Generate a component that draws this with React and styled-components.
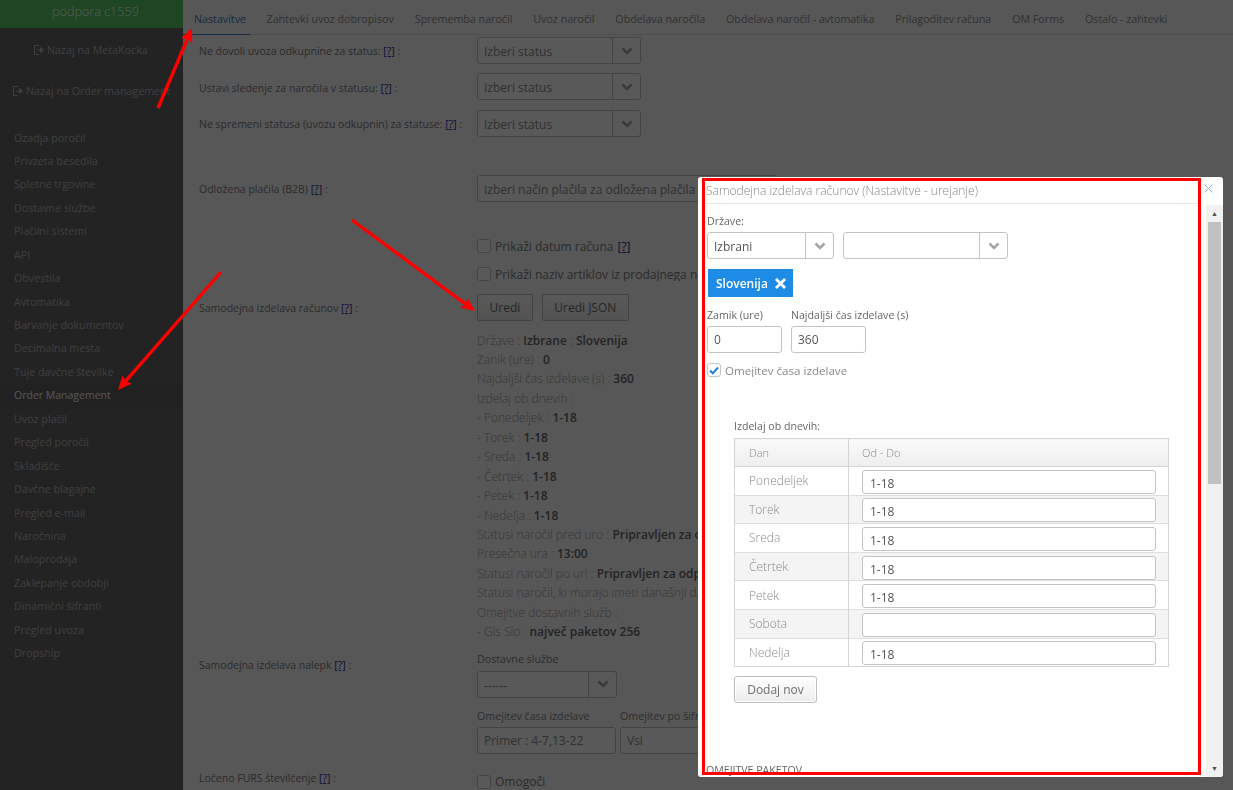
import React from 'react';
import styled, { createGlobalStyle } from 'styled-components';

const GlobalStyle = createGlobalStyle`
    html, body {
        margin: 0;
        height: 100%;
        overflow: hidden;
        font-family: "Open Sans", "Liberation Sans", sans-serif;
        font-size: 12px;
    }
    * { box-sizing: border-box; }
`;

const Page = styled.div`
    display: flex;
    width: 1233px;
    height: 790px;
    overflow: hidden;
    background: #fafafa;
`;

const Sidebar = styled.aside`
    flex: 0 0 183px;
    background: #656565;
    color: #b3b3b3;
    font-size: 10.7px;
`;

const Brand = styled.div`
    height: 28px;
    background: #56c864;
    color: #fff;
    font-size: 12.6px;
    font-weight: 300;
    line-height: 23px;
    padding-left: 52px;
`;

const BackLink = styled.div`
    display: flex;
    align-items: center;
    gap: 2px;
    height: 16px;
    padding-left: ${p => p.$left}px;
    margin-top: ${p => p.$top}px;
    white-space: nowrap;
    overflow: hidden;
    svg { flex: none; }
`;

const MenuList = styled.ul`
    list-style: none;
    margin: 27.5px 0 0;
    padding: 0;
`;

const MenuItem = styled.li`
    height: 23.45px;
    line-height: 23.45px;
    padding-left: 14px;
    ${p => p.$active && `
        background: #5f5f5f;
        color: #f5f5f5;
        font-size: 10.5px;
    `}
`;

const Main = styled.main`
    flex: 1;
    min-width: 0;
`;

const Tabs = styled.nav`
    display: flex;
    height: 35px;
    border-bottom: 1px solid #dedede;
    font-size: 10.7px;
    color: #8c8c8c;
`;

const Tab = styled.div`
    padding: 12px 0 0 11px;
    margin-right: 9.9px;
    line-height: 15px;
    white-space: nowrap;
    ${p => p.$active && `
        color: #3f7fc4;
        margin-right: 5.5px;
        padding-right: 4px;
        border-bottom: 1px solid #3f7fc4;
        height: 35px;
    `}
`;

const Form = styled.div`
    padding-left: 16px;
    color: #7a7a7a;
`;

const Row = styled.div`
    display: grid;
    grid-template-columns: 278px 1fr;
    margin-top: ${p => p.$top || 0}px;
`;

const Label = styled.label`
    font-size: 10.5px;
    line-height: 15px;
    padding-top: ${p => p.$pad ?? 7}px;
    white-space: nowrap;
    a { color: #2c2ca8; text-decoration: underline; }
`;

const Select = styled.div`
    display: flex;
    width: ${p => p.$width}px;
    height: 27px;
    flex: none;
    margin-top: ${p => p.$top || 0}px;
    background: #fff;
    border: 1px solid #c4c4c4;
    border-radius: 3px;
    font-size: 12px;
    color: ${p => p.$dark ? '#555' : '#8a8a8a'};
    overflow: hidden;
`;

const SelectValue = styled.div`
    flex: 1;
    padding-left: 6px;
    line-height: 27px;
    white-space: nowrap;
    overflow: hidden;
`;

const SelectArrow = styled.div`
    flex: 0 0 28px;
    display: flex;
    align-items: center;
    justify-content: center;
    border-left: 1px solid #c4c4c4;
    color: #a5a5a5;
`;

const CheckRow = styled.div`
    display: flex;
    align-items: center;
    gap: 4px;
    height: 14px;
    max-width: 221px;
    overflow: hidden;
    font-size: 12px;
    white-space: nowrap;
    margin-top: ${p => p.$top || 0}px;
    a { color: #2c2ca8; text-decoration: underline; }
`;

const Check = styled.span`
    flex: none;
    display: flex;
    align-items: center;
    justify-content: center;
    width: 14px;
    height: 14px;
    background: #fff;
    border: 1px solid #c4c4c4;
    border-radius: 3px;
`;

const Buttons = styled.div`
    display: flex;
    gap: 9px;
`;

const Button = styled.button`
    height: 27px;
    padding: 0 11.5px;
    background: linear-gradient(#fff, #ececec);
    border: 1px solid #bdbdbd;
    border-radius: 2px;
    color: #6e6e6e;
    font: 12px "Open Sans", sans-serif;
`;

const Summary = styled.div`
    margin-top: 9.5px;
    font-size: 12px;
    line-height: 19.45px;
    color: #a0a0a0;
    white-space: nowrap;
    font-weight: 300;
    b { color: #666; font-weight: 600; }
`;

const FieldLabel = styled.div`
    font-size: 10.7px;
    line-height: 14px;
    color: #858585;
    white-space: nowrap;
`;

const FieldRow = styled.div`
    display: flex;
    gap: 4px;
    margin-top: 11px;
`;

const Field = styled.div`
    display: flex;
    flex-direction: column;
    gap: 4px;
    width: ${p => p.$width}px;
`;

const TextBox = styled.div`
    width: ${p => p.$width ? `${p.$width}px` : '100%'};
    height: 27px;
    padding-left: 6px;
    line-height: 26px;
    background: #fff;
    border: 1px solid #c4c4c4;
    border-radius: 3px;
    font-size: 12px;
    color: ${p => p.$dark ? '#555' : '#8a8a8a'};
    white-space: nowrap;
`;

const Overlay = styled.div`
    position: fixed;
    inset: 0;
    background: rgba(0, 0, 0, 0.65);
`;

const Modal = styled.div`
    position: fixed;
    left: 698px;
    top: 177px;
    width: 525px;
    height: 600px;
    display: flex;
    flex-direction: column;
    background: #fff;
    border-radius: 3px;
    overflow: hidden;
`;

const ModalHeader = styled.div`
    display: flex;
    justify-content: space-between;
    flex: 0 0 28px;
    padding: 4px 10px 0 8px;
`;

const ModalTitle = styled.div`
    flex: 0 0 493px;
    height: 23px;
    border-bottom: 1px solid #e6e6e6;
    font-size: 12px;
    font-weight: 300;
    line-height: 20px;
    color: #888;
    white-space: nowrap;
`;

const Close = styled.div`
    margin-top: 3px;
    color: #8fb6d3;
    line-height: 0;
`;

const ModalBody = styled.div`
    flex: 1;
    display: flex;
    min-height: 0;
`;

const Content = styled.div`
    flex: 1;
    min-width: 0;
    padding: 9px 0 0 9px;
    font-size: 10.6px;
    line-height: 15px;
    color: #666;
    overflow: hidden;
`;

const Scrollbar = styled.div`
    flex: 0 0 17px;
    display: flex;
    flex-direction: column;
    align-items: center;
    background: #f1f1f1;
    color: #505050;
    font-size: 7px;
    line-height: 17px;
`;

const ScrollThumb = styled.div`
    width: 13px;
    height: 262px;
    background: #c1c1c1;
`;

const ScrollEnd = styled.div`
    margin-top: auto;
`;

const SelectGroup = styled.div`
    display: flex;
    gap: 9px;
    margin-top: 3px;
`;

const Tag = styled.div`
    display: flex;
    align-items: center;
    gap: 6px;
    width: fit-content;
    height: 28px;
    margin: 10px 0 0 1px;
    padding: 0 6px 0 8px;
    background: #1e8ce6;
    color: #fff;
    font-size: 12px;
    font-weight: 600;
`;

const InlineFields = styled.div`
    display: flex;
    gap: 9px;
    margin-top: 11px;
`;

const ModalField = styled.div`
    display: flex;
    flex-direction: column;
    gap: 3px;
    width: 75px;
    white-space: nowrap;
`;

const ModalCheck = styled(CheckRow)`
    color: #8a8a8a;
    font-size: 11.6px;
    margin-top: 10px;
`;

const TableBlock = styled.div`
    margin: 42px 0 0 27px;
    width: 435px;
`;

const Table = styled.table`
    width: 435px;
    margin-top: 4px;
    border-collapse: collapse;
    border: 1px solid #d4d4d4;
    table-layout: fixed;
    color: #8a8a8a;
    font-size: 12px;
    font-weight: 300;
    th {
        height: 28px;
        padding: 0 0 0 14px;
        background: linear-gradient(#fafafa, #eee);
        border: 1px solid #d4d4d4;
        text-align: left;
        font-weight: 300;
        font-size: 11px;
    }
    td {
        height: 28.6px;
        padding: 0 0 0 14px;
        border-left: 1px solid #d4d4d4;
        border-top: 1px solid #dedede;
    }
    td + td { padding-left: 13px; }
    th + th { padding-left: 13px; }
    tbody tr:nth-child(even) { background: #f4f4f4; }
`;

const CellInput = styled.div`
    width: 294px;
    height: 24px;
    margin-top: 2px;
    padding-left: 7px;
    line-height: 25px;
    background: #fff;
    border: 1px solid #c4c4c4;
    border-radius: 3px;
    color: #555;
    font-weight: 400;
`;

const AddButton = styled(Button)`
    display: block;
    width: 83px;
    padding: 0;
    margin-top: 9px;
    border-radius: 3px;
    box-shadow: inset 0 0 0 1px #fff;
`;

const SectionTitle = styled.div`
    margin: 60px 0 0 -1px;
    line-height: 14px;
    white-space: nowrap;
`;

const Highlight = styled.div`
    position: fixed;
    left: 702px;
    top: 178px;
    width: 499px;
    height: 597px;
    border: 3px solid #f00;
    pointer-events: none;
`;

const Arrows = styled.svg`
    position: fixed;
    inset: 0;
    pointer-events: none;
`;

const Chevron = () => (
    <svg width="12" height="8" viewBox="0 0 12 8">
        <polyline points="1.5,1.5 6,6 10.5,1.5" fill="none" stroke="currentColor" strokeWidth="2.6" />
    </svg>
);

const BackIcon = () => (
    <svg width="12" height="12" viewBox="0 0 12 12" fill="none" stroke="currentColor">
        <path d="M6 1.5H1.5v9H6" />
        <path d="M4 6h4.5M7.5 3.5 10.5 6l-3 2.5z" fill="currentColor" />
    </svg>
);

const menu = [
    'Ozadja poročil', 'Privzeta besedila', 'Spletne trgovine', 'Dostavne službe', 'Plačilni sistemi',
    'API', 'Obvestila', 'Avtomatika', 'Barvanje dokumentov', 'Decimalna mesta', 'Tuje davčne številke',
    'Order Management', 'Uvoz plačil', 'Pregled poročil', 'Skladišče', 'Davčne blagajne', 'Pregled e-mail',
    'Naročnina', 'Maloprodaja', 'Zaklepanje obdobji', 'Dinamični šifranti', 'Pregled uvoza', 'Dropship',
];

const tabs = [
    'Nastavitve', 'Zahtevki uvoz dobropisov', 'Sprememba naročil', 'Uvoz naročil', 'Obdelava naročila',
    'Obdelava naročil - avtomatika', 'Prilagoditev računa', 'OM Forms', 'Ostalo - zahtevki',
];

const days = [
    ['Ponedeljek', '1-18'], ['Torek', '1-18'], ['Sreda', '1-18'], ['Četrtek', '1-18'],
    ['Petek', '1-18'], ['Sobota', ''], ['Nedelja', '1-18'],
];

const summary = [
    ['Države : ', 'Izbrane', ' : ', 'Slovenija'],
    ['Zanik (ure) : ', '0'],
    ['Najdaljši čas izdelave (s) : ', '360'],
    ['Izdelaj ob dnevih :'],
    ['- Ponedeljek : ', '1-18'],
    ['- Torek : ', '1-18'],
    ['- Sreda : ', '1-18'],
    ['- Četrtek : ', '1-18'],
    ['- Petek : ', '1-18'],
    ['- Nedelja : ', '1-18'],
    ['Statusi naročil pred uro : ', 'Pripravljen za odpremo'],
    ['Presečna ura : ', '13:00'],
    ['Statusi naročil po uri : ', 'Pripravljen za odpremo'],
    ['Statusi naročil, ki morajo imeti današnji datum'],
    ['Omejitve dostavnih služb :'],
    ['- Gls Slo : ', 'največ paketov 256'],
];

const Help = () => <a>[?]</a>;

const RedArrow = ({ x1, y1, x2, y2 }) => {
    const angle = Math.atan2(y2 - y1, x2 - x1);
    const len = 15;
    const spread = 0.42;
    const a = [x2 - len * Math.cos(angle - spread), y2 - len * Math.sin(angle - spread)];
    const b = [x2 - len * Math.cos(angle + spread), y2 - len * Math.sin(angle + spread)];
    const midX = x2 - (len - 3) * Math.cos(angle);
    const midY = y2 - (len - 3) * Math.sin(angle);
    return (
        <g>
            <line x1={x1} y1={y1} x2={midX} y2={midY} stroke="#f00" strokeWidth="3.4" />
            <polygon points={`${x2},${y2} ${a[0]},${a[1]} ${midX},${midY} ${b[0]},${b[1]}`} fill="#f00" />
        </g>
    );
};

const App = () => (
    <>
        <GlobalStyle />
        <Page>
            <Sidebar>
                <Brand>podpora c1559</Brand>
                <BackLink $left={33} $top={14}><BackIcon />Nazaj na MetaKocka</BackLink>
                <BackLink $left={12} $top={25}><BackIcon />Nazaj na Order management</BackLink>
                <MenuList>
                    {menu.map(item => (
                        <MenuItem key={item} $active={item === 'Order Management'}>{item}</MenuItem>
                    ))}
                </MenuList>
            </Sidebar>
            <Main>
                <Tabs>
                    {tabs.map((tab, i) => <Tab key={tab} $active={i === 0}>{tab}</Tab>)}
                </Tabs>
                <Form>
                    <Row $top={2}>
                        <Label>Ne dovoli uvoza odkupnine za status: <Help /> :</Label>
                        <Select $width={164}><SelectValue>Izberi status</SelectValue><SelectArrow><Chevron /></SelectArrow></Select>
                    </Row>
                    <Row $top={9}>
                        <Label $pad={8}>Ustavi sledenje za naročila v statusu: <Help /> :</Label>
                        <Select $width={164}><SelectValue>Izberi status</SelectValue><SelectArrow><Chevron /></SelectArrow></Select>
                    </Row>
                    <Row $top={10}>
                        <Label>Ne spremeni statusa (uvozu odkupnin) za statuse: <Help /> :</Label>
                        <Select $width={164}><SelectValue>Izberi status</SelectValue><SelectArrow><Chevron /></SelectArrow></Select>
                    </Row>
                    <Row $top={38}>
                        <Label>Odložena plačila (B2B) <Help /> :</Label>
                        <Select $width={300}><SelectValue>Izberi način plačila za odložena plačila</SelectValue></Select>
                    </Row>
                    <Row $top={37}>
                        <span />
                        <CheckRow><Check />Prikaži datum računa <Help /></CheckRow>
                    </Row>
                    <Row $top={14}>
                        <span />
                        <CheckRow><Check />Prikaži naziv artiklov iz prodajnega naloga</CheckRow>
                    </Row>
                    <Row $top={13}>
                        <Label>Samodejna izdelava računov <Help /> :</Label>
                        <div>
                            <Buttons>
                                <Button>Uredi</Button>
                                <Button>Uredi JSON</Button>
                            </Buttons>
                            <Summary>
                                {summary.map((line, i) => (
                                    <div key={i}>
                                        {line.map((part, j) => (j % 2 ? <b key={j}>{part}</b> : <span key={j}>{part}</span>))}
                                    </div>
                                ))}
                            </Summary>
                        </div>
                    </Row>
                    <Row $top={10}>
                        <Label $pad={6}>Samodejna izdelava nalepk <Help /> :</Label>
                        <div>
                            <FieldLabel>Dostavne službe</FieldLabel>
                            <Select $width={140} $top={5}><SelectValue>------</SelectValue><SelectArrow><Chevron /></SelectArrow></Select>
                            <FieldRow>
                                <Field $width={139}>
                                    <FieldLabel>Omejitev časa izdelave</FieldLabel>
                                    <TextBox>Primer : 4-7,13-22</TextBox>
                                </Field>
                                <Field $width={140}>
                                    <FieldLabel>Omejitev po šifri</FieldLabel>
                                    <TextBox>Vsi</TextBox>
                                </Field>
                            </FieldRow>
                        </div>
                    </Row>
                    <Row $top={16}>
                        <Label $pad={1}>Ločeno FURS številčenje <Help /> :</Label>
                        <CheckRow $top={5}><Check />Omogoči</CheckRow>
                    </Row>
                </Form>
            </Main>
        </Page>
        <Overlay />
        <Modal>
            <ModalHeader>
                <ModalTitle>Samodejna izdelava računov (Nastavitve - urejanje)</ModalTitle>
                <Close>
                    <svg width="9" height="9" viewBox="0 0 9 9"><path d="M.5.5l8 8M8.5.5l-8 8" stroke="currentColor" fill="none" /></svg>
                </Close>
            </ModalHeader>
            <ModalBody>
                <Content>
                    <div>Države:</div>
                    <SelectGroup>
                        <Select $width={127} $dark><SelectValue>Izbrani</SelectValue><SelectArrow><Chevron /></SelectArrow></Select>
                        <Select $width={165} $dark><SelectValue /><SelectArrow><Chevron /></SelectArrow></Select>
                    </SelectGroup>
                    <Tag>
                        Slovenija
                        <svg width="13" height="13" viewBox="0 0 13 13"><path d="M2 2l9 9M11 2l-9 9" stroke="#fff" strokeWidth="2.8" fill="none" /></svg>
                    </Tag>
                    <InlineFields>
                        <ModalField>Zamik (ure)<TextBox $width={75} $dark>0</TextBox></ModalField>
                        <ModalField>Najdaljši čas izdelave (s)<TextBox $width={75} $dark>360</TextBox></ModalField>
                    </InlineFields>
                    <ModalCheck>
                        <Check>
                            <svg width="10" height="9" viewBox="0 0 10 9"><path d="M1 4.5l2.8 2.8L9 1.5" stroke="#1e7fd8" strokeWidth="2" fill="none" /></svg>
                        </Check>
                        Omejitev časa izdelave
                    </ModalCheck>
                    <TableBlock>
                        <div>Izdelaj ob dnevih:</div>
                        <Table>
                            <colgroup><col width="114" /><col /></colgroup>
                            <thead><tr><th>Dan</th><th>Od - Do</th></tr></thead>
                            <tbody>
                                {days.map(([day, value]) => (
                                    <tr key={day}>
                                        <td>{day}</td>
                                        <td><CellInput>{value}</CellInput></td>
                                    </tr>
                                ))}
                            </tbody>
                        </Table>
                        <AddButton>Dodaj nov</AddButton>
                    </TableBlock>
                    <SectionTitle>OMEJITVE PAKETOV</SectionTitle>
                </Content>
                <Scrollbar>
                    <div>▲</div>
                    <ScrollThumb />
                    <ScrollEnd>▼</ScrollEnd>
                </Scrollbar>
            </ModalBody>
        </Modal>
        <Highlight />
        <Arrows width="1233" height="790">
            <RedArrow x1={158} y1={108} x2={192} y2={28} />
            <RedArrow x1={352} y1={220} x2={475} y2={311} />
            <RedArrow x1={221} y1={272} x2={118} y2={390} />
        </Arrows>
    </>
);

export default App;
